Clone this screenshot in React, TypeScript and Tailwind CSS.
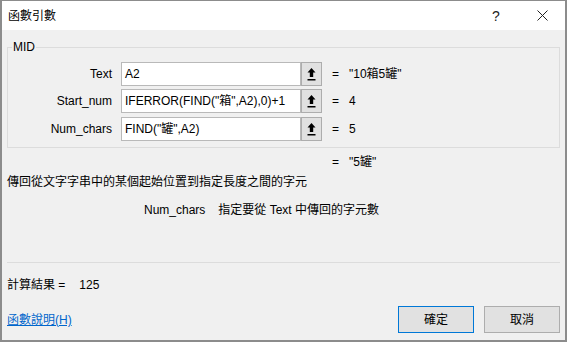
import React from "react";

const font = { fontFamily: '"Liberation Sans", "Noto Sans CJK TC", sans-serif' };

function RefButton() {
  return (
    <div className="w-[21px] h-[24px] border border-[#adadad] bg-[#e1e1e1] flex items-center justify-center">
      <svg width="9" height="13" viewBox="0 0 9 13">
        <polygon points="4.5,0 0.5,4.5 2.8,4.5 2.8,9 6.2,9 6.2,4.5 8.5,4.5" fill="#000" />
        <rect x="0.5" y="11" width="8" height="1.5" fill="#000" />
      </svg>
    </div>
  );
}

function Row({ label, value, result, className }: { label: string; value: string; result: string; className?: string }) {
  return (
    <div className={"flex items-center h-[24px] " + (className ?? "")}>
      <div className="w-[104px] text-right">{label}</div>
      <div className="ml-[9px] w-[180px] h-[24px] bg-white border border-[#b9b9b9] flex items-center pl-[3px] whitespace-nowrap overflow-hidden">
        {value}
      </div>
      <RefButton />
      <span className="ml-[10px]">=</span>
      <span className="ml-[10px]">{result}</span>
    </div>
  );
}

export default function App() {
  return (
    <div
      style={font}
      className="w-[567px] h-[342px] bg-[#f0f0f0] border-t border-x-2 border-b-2 border-[#8c8c8c] flex flex-col text-[12px] leading-[14px] text-black"
    >
      <div className="h-[29px] bg-white flex items-center shrink-0">
        <span className="pl-[6px]">函數引數</span>
        <div className="ml-auto flex h-full">
          <div className="w-[46px] h-full flex items-center justify-center text-[14px] text-[#222]">?</div>
          <div className="w-[46px] h-full flex items-center justify-center">
            <svg width="11" height="11" viewBox="0 0 11 11">
              <path d="M0.5 0.5 L10.5 10.5 M10.5 0.5 L0.5 10.5" stroke="#222" strokeWidth="1" />
            </svg>
          </div>
        </div>
      </div>

      <fieldset className="mt-[10px] ml-[5px] w-[553px] border border-[#dcdcdc] pb-[6px]">
        <legend className="ml-[4px] px-[1px] leading-[14px]">MID</legend>
        <div className="flex flex-col pt-[8px]">
          <Row label="Text" value="A2" result={'"10箱5罐"'} />
          <Row label="Start_num" value={'IFERROR(FIND("箱",A2),0)+1'} result="4" className="mt-[3px]" />
          <Row label="Num_chars" value={'FIND("罐",A2)'} result="5" className="mt-[4px]" />
        </div>
      </fieldset>

      <div className="mt-[7px] ml-[330px] flex">
        <span>=</span>
        <span className="ml-[10px]">"5罐"</span>
      </div>

      <div className="mt-[6px] ml-[5px]">傳回從文字字串中的某個起始位置到指定長度之間的字元</div>

      <div className="mt-[14px] ml-[142px] flex">
        <span>Num_chars</span>
        <span className="ml-[13px]">指定要從 Text 中傳回的字元數</span>
      </div>

      <div className="mt-[45px] ml-[5px] w-[553px] h-px bg-[#dcdcdc]" />

      <div className="mt-[15px] ml-[5px] flex">
        <span>計算結果 =</span>
        <span className="ml-[14px]">125</span>
      </div>

      <div className="mt-[14px] ml-[5px] mr-[5px] flex items-center">
        <span className="text-[#0066cc] underline">函數說明(H)</span>
        <div className="ml-auto flex gap-[10px]">
          <div className="w-[76px] h-[27px] border border-[#0078d7] bg-[#e1e1e1] flex items-center justify-center">確定</div>
          <div className="w-[76px] h-[27px] border border-[#adadad] bg-[#e1e1e1] flex items-center justify-center">取消</div>
        </div>
      </div>
    </div>
  );
}
